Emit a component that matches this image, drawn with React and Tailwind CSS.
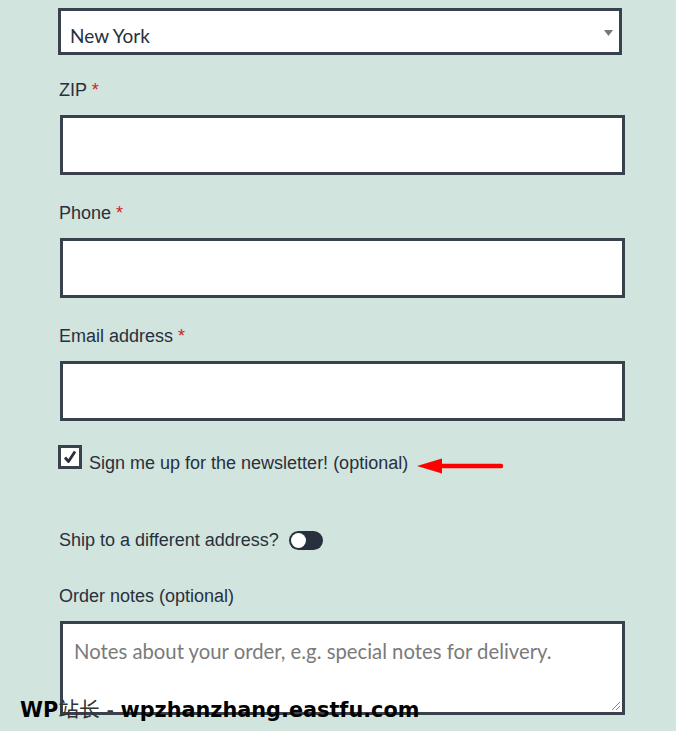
import React from "react";

const labelClass = "block text-[18px] leading-6 text-[#28303d]";
const inputClass = "block ml-[60px] w-[565px] h-[60px] border-[3px] border-[#39414d] bg-white";

function Field({ label, top }) {
  return (
    <div>
      <label className={`${labelClass} ml-[59px] ${top}`}>
        {label} <span className="text-[#d11c1c]">*</span>
      </label>
      <div className={`${inputClass} mt-[13px]`} />
    </div>
  );
}

export default function App() {
  return (
    <div
      className="relative h-[731px] overflow-hidden bg-[#d1e4dd]"
      style={{ fontFamily: '"Liberation Sans", Arial, sans-serif' }}
    >
      <div className="pt-[8px]">
        {/* state select */}
        <div className="ml-[58px] w-[564px] h-[47px] border-[3px] border-[#39414d] bg-white flex items-center justify-between pl-[9px] pr-[6px]">
          <span className="text-[19px] text-[#28303d] pt-[10px] font-['Lato',sans-serif]">New York</span>
          <svg width="9" height="6" viewBox="0 0 9 6" className="mt-[2px]">
            <path d="M0 0h9L4.5 6z" fill="#777" />
          </svg>
        </div>

        <Field label="ZIP" top="mt-[23px]" />
        <Field label="Phone" top="mt-[26px]" />
        <Field label="Email address" top="mt-[26px]" />

        {/* newsletter */}
        <div className="flex items-end mt-[24px] ml-[58px]">
          <div className="w-[24px] h-[24px] border-[3px] border-[#39414d] bg-white flex items-center justify-center">
            <svg width="14" height="14" viewBox="0 0 14 14">
              <path d="M2 7.5l3.5 4L12 1.5" fill="none" stroke="#28303d" strokeWidth="2.8" strokeLinejoin="round" />
            </svg>
          </div>
          <span className="ml-[7px] text-[18px] leading-6 text-[#28303d] -mb-[6px]">
            Sign me up for the newsletter! (optional)
          </span>
          <svg width="86" height="16" viewBox="0 0 86 16" className="ml-[9px] -mb-[5px]">
            <path d="M0 8L25 0.5v15z" fill="#ff0000" />
            <path d="M22 8H84" stroke="#ff0000" strokeWidth="4.5" strokeLinecap="round" />
          </svg>
        </div>

        {/* ship to different */}
        <div className="flex items-center mt-[59px] ml-[59px]">
          <span className="text-[18px] leading-6 text-[#28303d]">Ship to a different address?</span>
          <div className="ml-[10px] w-[34px] h-[19px] rounded-full bg-[#28303d] flex items-center pl-[2px]">
            <div className="w-[15px] h-[15px] rounded-full bg-white" />
          </div>
        </div>

        {/* order notes */}
        <label className={`${labelClass} ml-[59px] mt-[32px]`}>Order notes (optional)</label>
        <div className="relative ml-[60px] w-[565px] h-[94px] mt-[13px] border-[3px] border-[#39414d] bg-white pl-[11px] pt-[15px]">
          <span className="text-[20.3px] leading-6 text-[#7a7a7a] font-['Lato',sans-serif]">
            Notes about your order, e.g. special notes for delivery.
          </span>
          <svg width="10" height="10" viewBox="0 0 10 10" className="absolute right-[1px] bottom-[1px]">
            <path d="M9 1L1 9M9 5L5 9" stroke="#888" strokeWidth="1" />
          </svg>
        </div>
      </div>

      {/* watermark */}
      <div
        className="absolute left-[20px] top-[697px] text-[20.8px] leading-[26px] text-black whitespace-nowrap"
        style={{ fontFamily: '"DejaVu Sans", "Noto Sans CJK SC", sans-serif' }}
      >
        <span className="font-bold">WP</span>
        <span className="text-[#333]">站长 - </span>
        <span className="font-bold">wpzhanzhang.eastfu.com</span>
      </div>
    </div>
  );
}
